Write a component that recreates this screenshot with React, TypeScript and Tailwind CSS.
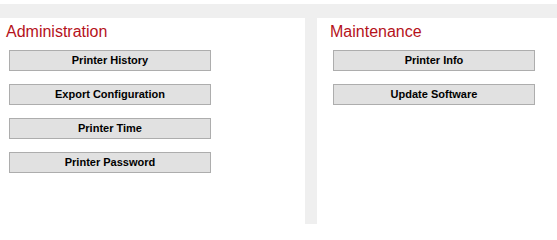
const admin = ["Printer History", "Export Configuration", "Printer Time", "Printer Password"];
const maint = ["Printer Info", "Update Software"];

function Btn({ label }: { label: string }) {
  return (
    <button className="mb-[13px] flex h-[21px] w-[202px] items-center justify-center border border-[#adadad] bg-[#e1e1e1] text-[11px] font-bold text-black">
      {label}
    </button>
  );
}

function Panel({ title, items, pad }: { title: string; items: string[]; pad: string }) {
  return (
    <div className={pad}>
      <h2 className="pt-[4px] text-[16px] leading-[20px] text-[#b5121b]">{title}</h2>
      <div className="mt-[8px] flex flex-col pl-[3px]">
        {items.map((item) => (
          <Btn key={item} label={item} />
        ))}
      </div>
    </div>
  );
}

export default function App() {
  return (
    <div
      className="flex h-[224px] w-[557px] flex-col bg-white"
      style={{ fontFamily: '"Liberation Sans", Arial, sans-serif' }}
    >
      <div className="mt-[4px] h-[14px] w-full bg-[#efefef]" />
      <div className="flex flex-1">
        <div className="w-[305px]">
          <Panel title="Administration" items={admin} pad="pl-[6px]" />
        </div>
        <div className="w-[12px] bg-[#efefef]" />
        <div className="flex-1">
          <Panel title="Maintenance" items={maint} pad="pl-[13px]" />
        </div>
      </div>
    </div>
  );
}
